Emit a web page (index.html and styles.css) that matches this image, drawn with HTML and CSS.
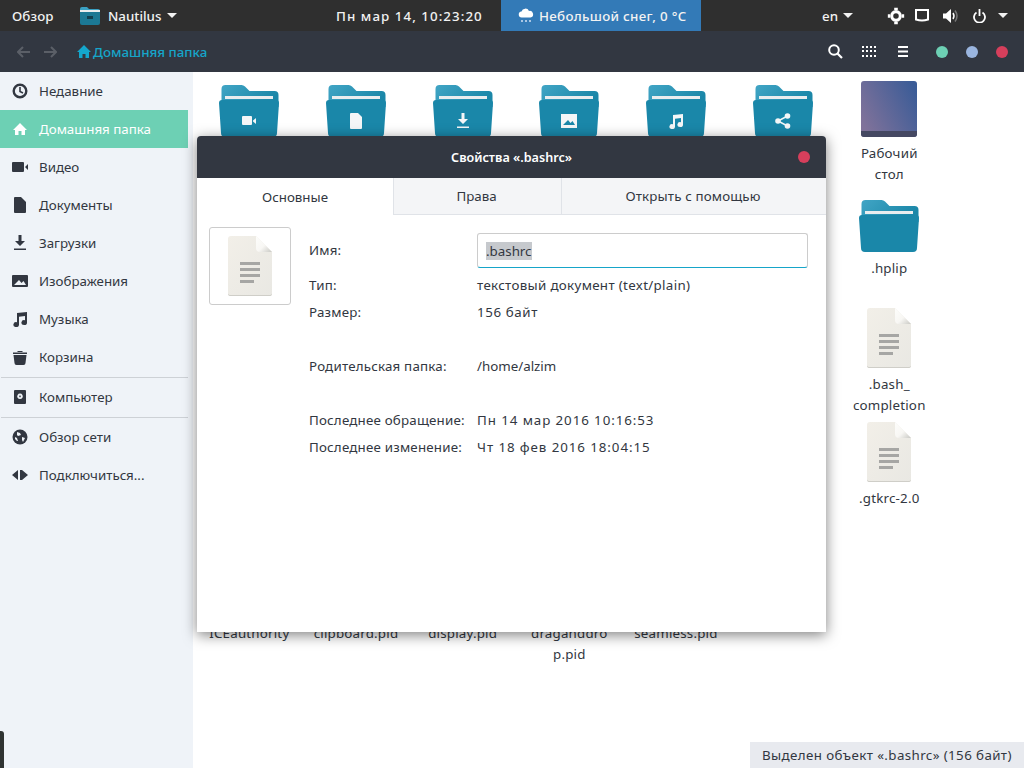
FILE: index.html
```html
<!DOCTYPE html>
<html lang="ru">
<head>
<meta charset="utf-8">
<title>Nautilus</title>
<link rel="stylesheet" href="styles.css">
</head>
<body>
<svg class="defs" width="0" height="0">
  <defs>
    <linearGradient id="fb" x1="0" y1="0" x2="1" y2="0.4"><stop offset="0" stop-color="#41a5c5"/><stop offset="1" stop-color="#1b87a8"/></linearGradient>
    <linearGradient id="dc" x1="0" y1="0" x2="1" y2="1"><stop offset="0" stop-color="#f2efe8"/><stop offset="1" stop-color="#e9e8e3"/></linearGradient>
    <linearGradient id="df" x1="0" y1="0" x2="1" y2="1"><stop offset="0" stop-color="#fdfdfb"/><stop offset="0.55" stop-color="#f8f7f4"/><stop offset="1" stop-color="#c9c9c4"/></linearGradient>
    <linearGradient id="ds" x1="0" y1="0.7" x2="1" y2="0.2"><stop offset="0" stop-color="#80729a"/><stop offset="1" stop-color="#3b5c97"/></linearGradient>
    <symbol id="folder" viewBox="0 0 60 52">
      <path d="M2 4q0-4 4-4h16q2 0 3.500 1.500L30 6h25q4 0 4 4v12H2z" fill="url(#fb)" transform="translate(0.500 0)"/>
      <rect x="6" y="11" width="48" height="3" fill="#e9edef"/>
      <path d="M3 15h54q3 0 3 3l-2 30q0 4-4 4H6q-4 0-4-4L0 18q0-3 3-3z" fill="#1a87a9"/>
    </symbol>
    <symbol id="doc" viewBox="0 0 44 60">
      <path d="M3 0h25l16 16v41q0 3-3 3H3q-3 0-3-3V3q0-3 3-3z" fill="url(#dc)"/>
      <path d="M0 58v-1q0 2 3 2h38q3 0 3-2v1q0 2-3 2H3q-3 0-3-2z" fill="#cfcec8"/>
      <path d="M28 0l16 16H32q-4 0-4-4z" fill="url(#df)"/>
      <path d="M12 26h20v3H12zM12 32h20v3H12zM12 38h20v3H12zM12 44h14v3H12z" fill="#a6a6a4"/>
    </symbol>
  </defs>
</svg>
<div class="screen">
  <header class="topbar">
    <span class="overview">Обзор</span>
    <span class="app">
      <svg class="app-icon" width="20" height="18" viewBox="0 0 20 18"><path d="M0 2q0-2 2-2h5l2 2h9q2 0 2 2v3H0z" fill="#3aa0c2"/><path d="M0 5h20v11q0 2-2 2H2q-2 0-2-2z" fill="#1b7894"/><rect x="0" y="3" width="20" height="2" fill="#e9edef"/><rect x="7" y="9" width="6" height="3" fill="#123e4e"/></svg>
      <span>Nautilus</span><i class="caret"></i>
    </span>
    <span class="clock">Пн мар 14, 10:23:20</span>
    <span class="weather">
      <svg width="16" height="16" viewBox="0 0 16 16"><path d="M4 9.500a3 3 0 0 1-.5-6A4 4 0 0 1 11 3a3.200 3.200 0 0 1 1.500 6.500z" fill="#fff"/><path d="M3 12h2v2H3zM7 12h2v2H7zM11 12h2v2h-2z" fill="#a9c6e4"/></svg>
      <span>Небольшой снег, 0 °C</span>
    </span>
    <span class="lang">en<i class="caret"></i></span>
    <span class="tray">
      <svg class="tray-aim" width="14" height="14" viewBox="0 0 14 14"><circle cx="7" cy="7" r="3.600" fill="none" stroke="#fff" stroke-width="2.600"/><path d="M5.500 0h3v2h-3zM5.500 12h3v2h-3zM0 5.500h2v3H0zM12 5.500h2v3h-2z" fill="#fff"/></svg>
      <svg width="14" height="13" viewBox="0 0 14 13"><path d="M1 1h12v9.500q-6 2-12 0z" fill="none" stroke="#fff" stroke-width="2"/></svg>
      <svg width="16" height="14" viewBox="0 0 16 14"><path d="M0 4.500h3L8 0v14L3 9.500H0z" fill="#fff"/><path d="M10 4q2 3 0 6" fill="none" stroke="#fff" stroke-width="1.500"/><path d="M12 1.500q4 5.500 0 11" fill="none" stroke="#777" stroke-width="1.500"/></svg>
      <svg width="13" height="14" viewBox="0 0 13 14"><path d="M3.500 3.500a5.500 5.500 0 1 0 6 0" fill="none" stroke="#fff" stroke-width="1.800"/><path d="M5.600 0h1.800v7H5.600z" fill="#fff"/></svg>
      <i class="caret"></i>
    </span>
  </header>
  <div class="toolbar">
    <svg class="nav" width="13" height="12" viewBox="0 0 13 12"><path d="M6 1L1 6l5 5M1 6h12" fill="none" stroke="#5b5f67" stroke-width="2"/></svg>
    <svg class="nav" width="13" height="12" viewBox="0 0 13 12"><path d="M7 1l5 5-5 5M12 6H0" fill="none" stroke="#5b5f67" stroke-width="2"/></svg>
    <span class="crumb">
      <svg width="14" height="13" viewBox="0 0 14 13"><path d="M7 0l7 7h-2v6H8.500V9h-3v4H2V7H0z" fill="#14a6cc"/></svg>
      <span>Домашняя папка</span>
    </span>
    <span class="tools">
      <svg width="15" height="15" viewBox="0 0 15 15"><circle cx="6" cy="6" r="4.800" fill="none" stroke="#fff" stroke-width="2"/><path d="M9.500 9.500L14 14" stroke="#fff" stroke-width="2.200"/></svg>
      <svg width="15" height="11" viewBox="0 0 15 11"><path d="M0 0h2v2H0zM4 0h2v2H4zM8 0h2v2H8zM12 0h2v2h-2zM0 4h2v2H0zM4 4h2v2H4zM8 4h2v2H8zM12 4h2v2h-2zM0 9h2v2H0zM4 9h2v2H4zM8 9h2v2H8zM12 9h2v2h-2z" fill="#fff"/></svg>
      <svg width="10" height="11" viewBox="0 0 10 11"><path d="M0 0h10v2H0zM0 4.500h10v2H0zM0 9h10v2H0z" fill="#fff"/></svg>
    </span>
    <span class="dots"><i class="dot dot-green"></i><i class="dot dot-blue"></i><i class="dot dot-red"></i></span>
  </div>
  <div class="body">
    <nav class="sidebar">
      <div class="side-item"><svg width="16" height="16" viewBox="0 0 16 16"><circle cx="8" cy="8" r="6.300" fill="none" stroke="#323741" stroke-width="2.400"/><path d="M8 4v4.500l3 1.500" fill="none" stroke="#323741" stroke-width="1.600"/></svg>Недавние</div>
      <div class="side-item active"><svg width="16" height="16" viewBox="0 0 16 16"><path d="M8 2l7 7h-2v5H9.500v-4h-3v4H3V9H1z" fill="#fff"/></svg>Домашняя папка</div>
      <div class="side-item"><svg width="16" height="16" viewBox="0 0 16 16"><path d="M1 3h10q1 0 1 1v8q0 1-1 1H1q-1 0-1-1V4q0-1 1-1zM13 8l3-3v6z" fill="#323741"/></svg>Видео</div>
      <div class="side-item"><svg width="16" height="16" viewBox="0 0 16 16"><path d="M3 0h6l5 5v10q0 1-1 1H3q-1 0-1-1V1q0-1 1-1z" fill="#323741"/></svg>Документы</div>
      <div class="side-item"><svg width="16" height="16" viewBox="0 0 16 16"><path d="M6.500 0h3v6H13l-5 5-5-5h3.500zM2 13.500h12V15H2z" fill="#323741"/></svg>Загрузки</div>
      <div class="side-item"><svg width="16" height="16" viewBox="0 0 16 16"><path fill-rule="evenodd" d="M1 2h14q1 0 1 1v10q0 1-1 1H1q-1 0-1-1V3q0-1 1-1zM2 12h12l-2.500-4-2 2L7 7z" fill="#323741"/></svg>Изображения</div>
      <div class="side-item"><svg width="16" height="16" viewBox="0 0 16 16"><path d="M5 2l10-1v10.500a2.800 2.500 0 1 1-2-2.300V5L7 5.700v7.800a2.800 2.500 0 1 1-2-2.300z" fill="#323741"/></svg>Музыка</div>
      <div class="side-item"><svg width="16" height="16" viewBox="0 0 16 16"><path d="M1 3.500h14V5H1zM5.500 2h5v1h-5zM1.500 6h13l-1 8q0 2-2 2h-7q-2 0-2-2z" fill="#323741"/></svg>Корзина</div>
      <hr class="sep">
      <div class="side-item"><svg width="16" height="16" viewBox="0 0 16 16"><path fill-rule="evenodd" d="M3 1h10q1 0 1 1v12q0 1-1 1H3q-1 0-1-1V2q0-1 1-1zM8 4.500a2.800 2.800 0 1 0 .01 0zM8 6.500a.8.800 0 1 1-.01 0z" fill="#323741"/></svg>Компьютер</div>
      <hr class="sep">
      <div class="side-item"><svg width="16" height="16" viewBox="0 0 16 16"><circle cx="8" cy="8" r="7.500" fill="#323741"/><path d="M5 3l3 1 1 2-3 1-1-1zM10 8l3 1-2 4-1-2zM3 8l2 1 1 3-1 0-2-2z" fill="#eff3f8"/></svg>Обзор сети</div>
      <div class="side-item"><svg width="16" height="16" viewBox="0 0 16 16"><path d="M0 8l6-5v10zM8 3h2l6 5-6 5H8z" fill="#323741"/></svg>Подключиться...</div>
    </nav>
    <main class="files">
      <div class="file"><div class="ico"><svg class="folder" width="60" height="52"><use href="#folder"/></svg><svg class="emblem" width="16" height="16" viewBox="0 0 16 16"><path d="M2 3h8q1 0 1 1v7q0 1-1 1H2q-1 0-1-1V4q0-1 1-1zM12 7.500L15 5v6l-3-2.500z" fill="#f4f6f7"/></svg></div></div>
      <div class="file"><div class="ico"><svg class="folder" width="60" height="52"><use href="#folder"/></svg><svg class="emblem" width="16" height="16" viewBox="0 0 16 16"><path d="M3 0h7l4 4v11q0 1-1 1H3q-1 0-1-1V1q0-1 1-1z" fill="#f4f6f7"/></svg></div></div>
      <div class="file"><div class="ico"><svg class="folder" width="60" height="52"><use href="#folder"/></svg><svg class="emblem" width="16" height="16" viewBox="0 0 16 16"><path d="M6.500 0h3v6H13l-5 5-5-5h3.500zM2 13.500h12V15H2z" fill="#f4f6f7"/></svg></div></div>
      <div class="file"><div class="ico"><svg class="folder" width="60" height="52"><use href="#folder"/></svg><svg class="emblem" width="16" height="16" viewBox="0 0 16 16"><path fill-rule="evenodd" d="M0 1h16v14H0zM2 12h12l-2.500-4-2 2L7 7z" fill="#f4f6f7"/></svg></div></div>
      <div class="file"><div class="ico"><svg class="folder" width="60" height="52"><use href="#folder"/></svg><svg class="emblem" width="16" height="16" viewBox="0 0 16 16"><path d="M5 2l10-1v10.500a2.800 2.500 0 1 1-2-2.300V5L7 5.700v7.800a2.800 2.500 0 1 1-2-2.300z" fill="#f4f6f7"/></svg></div></div>
      <div class="file"><div class="ico"><svg class="folder" width="60" height="52"><use href="#folder"/></svg><svg class="emblem" width="16" height="16" viewBox="0 0 16 16"><circle cx="12.500" cy="3" r="2.800" fill="#f4f6f7"/><circle cx="3" cy="8" r="2.800" fill="#f4f6f7"/><circle cx="12.500" cy="13" r="2.800" fill="#f4f6f7"/><path d="M12.500 3L3 8l9.500 5" fill="none" stroke="#f4f6f7" stroke-width="1.500"/></svg></div></div>
      <div class="file"><div class="ico"><svg width="56" height="56" viewBox="0 0 56 56"><rect width="56" height="56" rx="3" fill="url(#ds)"/><path d="M0 50h56v3q0 3-3 3H3q-3 0-3-3z" fill="#454862"/></svg></div><div class="name">Рабочий<br>стол</div></div>

      <div class="file last"><div class="ico"><svg width="60" height="52"><use href="#folder"/></svg></div><div class="name">.hplip</div></div>
      <div class="file last"><div class="ico"><svg width="44" height="60"><use href="#doc"/></svg></div><div class="name">.bash_<br>completion</div></div>
      <div class="file last"><div class="ico"><svg width="44" height="60"><use href="#doc"/></svg></div><div class="name">.gtkrc-2.0</div></div>

      <div class="file first"><div class="ico"><svg width="44" height="60"><use href="#doc"/></svg></div><div class="name">ICEauthority</div></div>
      <div class="file"><div class="ico"><svg width="44" height="60"><use href="#doc"/></svg></div><div class="name">clipboard.pid</div></div>
      <div class="file"><div class="ico"><svg width="44" height="60"><use href="#doc"/></svg></div><div class="name">display.pid</div></div>
      <div class="file"><div class="ico"><svg width="44" height="60"><use href="#doc"/></svg></div><div class="name">draganddro<br>p.pid</div></div>
      <div class="file"><div class="ico"><svg width="44" height="60"><use href="#doc"/></svg></div><div class="name">seamless.pid</div></div>
    </main>
  </div>

  <section class="dialog">
    <div class="dlg-title">
      <span>Свойства «.bashrc»</span>
      <i class="dot dot-red dlg-close"></i>
    </div>
    <div class="tabs">
      <div class="tab tab-on">Основные</div>
      <div class="tab tab-2">Права</div>
      <div class="tab tab-3">Открыть с помощью</div>
    </div>
    <div class="dlg-body">
      <div class="preview"><svg width="44" height="60"><use href="#doc"/></svg></div>
      <div class="props">
        <div class="key">Имя:</div><div class="field"><span class="selected">.bashrc</span></div>
        <div class="key">Тип:</div><div class="val val-type">текстовый документ (text/plain)</div>
        <div class="key">Размер:</div><div class="val val-size">156 байт</div>
        <div class="spacer"></div>
        <div class="key">Родительская папка:</div><div class="val">/home/alzim</div>
        <div class="spacer"></div>
        <div class="key">Последнее обращение:</div><div class="val val-date">Пн 14 мар 2016 10:16:53</div>
        <div class="key">Последнее изменение:</div><div class="val val-date">Чт 18 фев 2016 18:04:15</div>
      </div>
    </div>
  </section>

  <div class="status">Выделен объект «.bashrc» (156 байт)</div>
  <div class="edge"></div>
</div>
</body>
</html>
```
FILE: styles.css
```css
* { box-sizing: border-box; }
html, body { margin: 0; padding: 0; }
body { font-family: "Noto Sans", "Open Sans", sans-serif; font-size: 13.33px; color: #323741; background: #fff; }
.defs { position: absolute; }
.screen { position: relative; width: 1024px; height: 768px; overflow: hidden; display: flex; flex-direction: column; }

.topbar { height: 31px; flex: none; display: flex; align-items: center; background: #2f2f2f; color: #f2f2f2; font-weight: 500; }
.overview { margin-left: 12px; width: 68px; letter-spacing: .1px; }
.app { display: flex; align-items: center; gap: 8px; width: 221px; }
.app-icon { flex: none; }
.app .caret { margin-left: -2px; }
.clock { width: 165px; margin-left: 35px; letter-spacing: 1.05px; white-space: nowrap; }
.weather { align-self: stretch; width: 200px; display: flex; align-items: center; gap: 5px; padding-left: 17px; background: #337ab7; letter-spacing: .3px; }
.lang { display: flex; align-items: center; gap: 5px; margin-left: 121px; width: 66px; }
.tray { display: flex; align-items: center; gap: 14px; }
.tray-aim { margin: 0 -2px 0 1px; transform: scale(1.2); }
.caret { display: inline-block; width: 0; height: 0; border-left: 5px solid transparent; border-right: 5px solid transparent; border-top: 5px solid #f2f2f2; }
.tray .caret { margin-left: -2px; }

.toolbar { height: 41px; flex: none; display: flex; align-items: center; background: #323741; padding-left: 17px; }
.nav { margin-right: 14px; }
.crumb { display: flex; align-items: center; gap: 2px; margin-left: 6px; color: #16a5c9; font-weight: 500; }
.tools { display: flex; align-items: center; margin-left: 621px; gap: 19px; }
.tools svg:last-child { margin-left: 2px; }
.dots { display: flex; gap: 18px; margin-left: 28px; }
.dot { display: block; width: 12px; height: 12px; border-radius: 50%; }
.dot-green { background: #6dd0b4; }
.dot-blue { background: #9ab5df; }
.dot-red { background: #d63f5c; }

.body { flex: 1; display: flex; min-height: 0; }
.sidebar { width: 193px; flex: none; padding: 0 5px 0 0; background: #eff3f8; }
.side-item { height: 38px; display: flex; align-items: center; gap: 11px; padding-left: 12px; }
.side-item svg { flex: none; }
.side-item.active { background: #6dd0b4; color: #fff; }
.sep { height: 1px; margin: 1px 0 0 1px; border: 0; background: #cdd1d6; }

.files { flex: 1; padding: 5px 0 0 3px; display: grid; grid-template-columns: repeat(7, 106.67px); grid-template-rows: 115px 116px 114px 135px auto; align-content: start; }
.file { display: flex; flex-direction: column; align-items: center; }
.file.last { grid-column: 7; }
.file.first { grid-column: 1; }
.ico { position: relative; height: 60px; flex: none; display: flex; align-items: flex-end; justify-content: center; margin-bottom: 6px; }
.emblem { position: absolute; left: 22px; bottom: 8px; }
.name { text-align: center; line-height: 21px; letter-spacing: .2px; white-space: nowrap; }

.dialog { position: absolute; left: 197px; top: 136px; width: 629px; height: 496px; display: flex; flex-direction: column; background: #fff; border-radius: 4px 4px 0 0; box-shadow: 0 3px 14px rgba(0,0,0,.5); }
.dlg-title { position: relative; height: 42px; flex: none; display: flex; align-items: center; justify-content: center; background: #323741; color: #fff; font-weight: 600; border-radius: 4px 4px 0 0; font-size: 12.6px; }
.dlg-close { position: absolute; right: 16px; top: 15px; }
.tabs { display: flex; height: 37px; flex: none; }
.tab { display: flex; align-items: center; justify-content: center; background: #f4f5f7; border-bottom: 1px solid #e0e3e8; }
.tab-on { width: 196px; background: #fff; border-bottom: 0; }
.tab-2 { width: 168px; border-left: 1px solid #e0e3e8; padding-right: 2px; }
.tab-3 { flex: 1; border-left: 1px solid #e0e3e8; letter-spacing: .15px; padding-right: 2px; }
.dlg-body { display: flex; padding: 12px 0 0 12px; }
.preview { width: 82px; height: 78px; flex: none; display: flex; align-items: center; justify-content: center; border: 1px solid #ccc; border-radius: 3px; }
.props { margin-left: 18px; padding-top: 6px; display: grid; grid-template-columns: 168px 331px; grid-template-rows: 38px; grid-auto-rows: 27px; align-items: center; }
.key { letter-spacing: .2px; white-space: nowrap; }
.key:first-child { align-self: start; line-height: 35px; }
.field { align-self: start; height: 35px; display: flex; align-items: center; padding-left: 8px; border: 1px solid #ccc; border-bottom: 1px solid #16a5c9; border-radius: 3px; }
.selected { background: #c6c9cd; line-height: 18px; }
.val-type { letter-spacing: .33px; }
.val-size { letter-spacing: .6px; }
.val-date { letter-spacing: .92px; }
.spacer { grid-column: 1 / -1; }

.status { position: absolute; right: 0; bottom: 0; width: 274px; height: 26px; padding-left: 12px; line-height: 26px; background: #e8eaef; letter-spacing: .4px; white-space: nowrap; }
.edge { position: absolute; left: 0; bottom: 0; width: 4px; height: 37px; background: #2f3332; border-top-right-radius: 3px; }
```
